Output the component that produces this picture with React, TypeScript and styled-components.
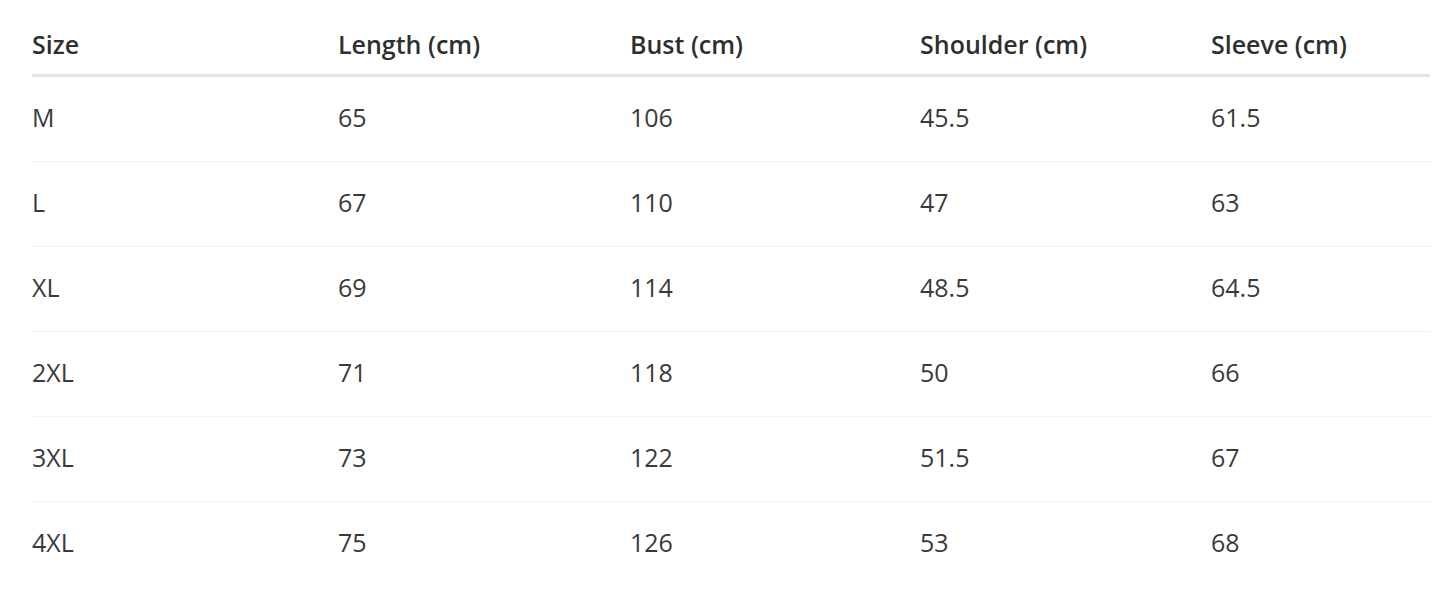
import React from 'react';
import styled, { createGlobalStyle } from 'styled-components';

const GlobalStyle = createGlobalStyle`
  html, body {
    margin: 0;
    padding: 0;
    background: #ffffff;
  }
  body {
    font-family: 'Open Sans', 'Noto Sans', Arial, sans-serif;
    color: #333333;
  }
`;

const headers = ['Size', 'Length (cm)', 'Bust (cm)', 'Shoulder (cm)', 'Sleeve (cm)'];

const rows: string[][] = [
  ['M', '65', '106', '45.5', '61.5'],
  ['L', '67', '110', '47', '63'],
  ['XL', '69', '114', '48.5', '64.5'],
  ['2XL', '71', '118', '50', '66'],
  ['3XL', '73', '122', '51.5', '67'],
  ['4XL', '75', '126', '53', '68'],
];

const App: React.FC = () => {
  return (
    <>
      <GlobalStyle />
      <Page>
        <Table>
          <HeadRow>
            {headers.map((h) => (
              <HeadCell key={h}>{h}</HeadCell>
            ))}
          </HeadRow>
          {rows.map((r, i) => (
            <BodyRow key={r[0]} $last={i === rows.length - 1}>
              {r.map((c, j) => (
                <Cell key={j}>{c}</Cell>
              ))}
            </BodyRow>
          ))}
        </Table>
      </Page>
    </>
  );
};

const Page = styled.div`
  width: 1445px;
  height: 612px;
  box-sizing: border-box;
  padding: 0 15px 0 32px;
  background: #ffffff;
`;

const Table = styled.div`
  display: flex;
  flex-direction: column;
`;

const columns = `306px 292px 290px 291px 1fr`;

const HeadRow = styled.div`
  display: grid;
  grid-template-columns: ${columns};
  height: 60px;
  align-items: center;
  padding-top: 14px;
  border-bottom: 3px solid #e4e4e4;
`;

const BodyRow = styled.div<{ $last?: boolean }>`
  display: grid;
  grid-template-columns: ${columns};
  height: 85px;
  align-items: center;
  padding-bottom: 5px;
  box-sizing: border-box;
  border-bottom: ${(p) => (p.$last ? 'none' : '1px solid #f1f1f1')};
`;

const HeadCell = styled.div`
  font-size: 25px;
  font-weight: 600;
  color: #2f2f2f;
`;

const Cell = styled.div`
  font-size: 25px;
  font-weight: 400;
  color: #3a3a3a;
`;

export default App;
